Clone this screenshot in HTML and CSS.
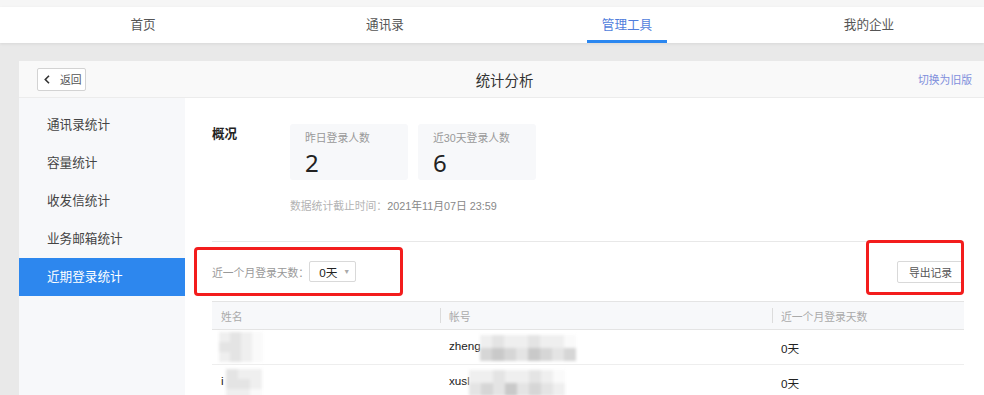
FILE: index.html
```html
<!DOCTYPE html>
<html lang="zh-CN">
<head>
    <meta charset="UTF-8">
    <title>统计分析</title>
    <link rel="stylesheet" href="styles.css">
</head>
<body>
	<div class="top-strip"></div>
	<nav class="top-nav">
		<a class="nav-item"><span>首页</span></a>
		<a class="nav-item"><span>通讯录</span></a>
		<a class="nav-item active"><span>管理工具</span></a>
		<a class="nav-item"><span>我的企业</span></a>
	</nav>

	<div class="panel">
		<div class="panel-header">
			<div class="header-left">
				<button class="back-btn">
					<svg width="6" height="9" viewBox="0 0 6 9"><path d="M5 0.8 L1.3 4.5 L5 8.2" fill="none" stroke="#333" stroke-width="1.6"/></svg>
					<span>返回</span>
				</button>
			</div>
			<div class="panel-title">统计分析</div>
			<div class="header-right"><a class="old-version">切换为旧版</a></div>
		</div>

		<div class="panel-body">
			<ul class="side-menu">
				<li>通讯录统计</li>
				<li>容量统计</li>
				<li>收发信统计</li>
				<li>业务邮箱统计</li>
				<li class="active">近期登录统计</li>
			</ul>

			<div class="content">
				<div class="overview">
					<div class="overview-label">概况</div>
					<div class="overview-main">
						<div class="cards">
							<div class="card">
								<div class="card-label">昨日登录人数</div>
								<div class="card-num">2</div>
							</div>
							<div class="card">
								<div class="card-label">近30天登录人数</div>
								<div class="card-num">6</div>
							</div>
						</div>
						<div class="stat-time">数据统计截止时间：<span>2021年11月07日 23:59</span></div>
					</div>
				</div>

				<div class="filter-bar">
					<div class="filter">
						<span class="filter-label">近一个月登录天数：</span>
						<div class="select"><span>0天</span><span class="arrow">▼</span></div>
					</div>
					<button class="export-btn">导出记录</button>
				</div>

				<table class="login-table">
					<colgroup>
						<col class="col-name">
						<col class="col-account">
						<col class="col-days">
					</colgroup>
					<thead>
						<tr><th>姓名</th><th>帐号</th><th>近一个月登录天数</th></tr>
					</thead>
					<tbody>
						<tr>
							<td><span class="mosaic m-name"><i class="c1"></i><i class="c2"></i><i class="c1"></i><i class="c0"></i><i class="c2"></i><i class="c2"></i><i class="c1"></i><i class="c0"></i><i class="c1"></i><i class="c2"></i><i class="c1"></i><i class="c0"></i></span></td>
							<td>zheng<span class="mosaic m-acc"><i class="c1"></i><i class="c2"></i><i class="c1"></i><i class="c1"></i><i class="c2"></i><i class="c1"></i><i class="c1"></i><i class="c0"></i><i class="c3"></i><i class="c4"></i><i class="c3"></i><i class="c2"></i><i class="c4"></i><i class="c3"></i><i class="c2"></i><i class="c3"></i></span></td>
							<td>0天</td>
						</tr>
						<tr>
							<td>i<span class="mosaic m-name2"><i class="c2"></i><i class="c1"></i><i class="c1"></i><i class="c2"></i><i class="c2"></i><i class="c1"></i><i class="c1"></i><i class="c1"></i><i class="c0"></i></span></td>
							<td>xusl<span class="mosaic m-acc"><i class="c1"></i><i class="c1"></i><i class="c2"></i><i class="c1"></i><i class="c1"></i><i class="c2"></i><i class="c1"></i><i class="c0"></i><i class="c2"></i><i class="c3"></i><i class="c2"></i><i class="c4"></i><i class="c2"></i><i class="c3"></i><i class="c2"></i><i class="c1"></i></span></td>
							<td>0天</td>
						</tr>
					</tbody>
				</table>
			</div>
		</div>
	</div>

	<div class="mark mark-filter"></div>
	<div class="mark mark-export"></div>
</body>
</html>
```

FILE: styles.css
```css
html, body {
	overflow: hidden;
}

body {
	margin: 0;
	width: 984px;
	height: 395px;
	background: #e9e9e9;
	font-family: "Liberation Sans", "Noto Sans CJK SC", sans-serif;
	color: #333;
	position: relative;
}

.top-strip {
	height: 7px;
	background: #f6f6f6;
}

.top-nav {
	display: flex;
	height: 36px;
	padding-left: 22px;
	background: #fff;
	box-shadow: 0 1px 3px rgba(0, 0, 0, 0.08);
}

.nav-item {
	width: 242px;
	flex: none;
	text-align: center;
	font-size: 12.6px;
	color: #555;
}

.nav-item span {
	display: inline-block;
	height: 36px;
	line-height: 36px;
	padding: 0 15px;
}

.nav-item.active span {
	color: #4f7ddc;
	box-shadow: inset 0 -3px 0 #2b87f0;
}

.panel {
	width: 972px;
	margin: 18px 0 0 19px;
}

.panel-header {
	display: grid;
	grid-template-columns: 1fr auto 1fr;
	align-items: center;
	height: 36px;
	padding: 0 19px 0 18px;
	background: #f9f9f9;
	border-bottom: 1px solid #ececec;
}

.back-btn {
	display: flex;
	align-items: center;
	gap: 10px;
	width: 49px;
	height: 23px;
	padding: 0 0 0 6px;
	border: 1px solid #d3d3d3;
	border-radius: 2px;
	background: #fff;
	font-family: inherit;
	font-size: 10.8px;
	color: #555;
}

.panel-title {
	font-size: 14.4px;
	color: #333;
}

.header-right {
	text-align: right;
}

.old-version {
	font-size: 10.8px;
	color: #7f8fdc;
}

.panel-body {
	display: flex;
	min-height: 320px;
}

.side-menu {
	width: 166px;
	flex: none;
	margin: 0;
	padding: 8px 0 0;
	list-style: none;
	background: #f7f8fa;
}

.side-menu li {
	height: 38px;
	line-height: 38px;
	padding-left: 28px;
	font-size: 12.6px;
	color: #444;
}

.side-menu li.active {
	background: #2d87ee;
	color: #fff;
}

.content {
	flex: 1;
	padding: 26px 27px 0;
	background: #fff;
}

.overview {
	display: flex;
}

.overview-label {
	width: 78px;
	flex: none;
	line-height: 18px;
	font-size: 12.6px;
	font-weight: bold;
	color: #222;
	font-family: "Noto Sans CJK SC", serif;
}

.cards {
	display: flex;
	gap: 10px;
}

.card {
	width: 118px;
	height: 56px;
	box-sizing: border-box;
	padding: 7px 15px 0;
	background: #f7f8fa;
	border-radius: 3px;
}

.card-label {
	font-size: 10.8px;
	line-height: 14px;
	color: #999;
}

.card-num {
	margin-top: 4px;
	font-family: "Noto Sans", sans-serif;
	font-size: 24px;
	line-height: 28px;
	color: #222;
}

.stat-time {
	margin-top: 19px;
	font-size: 10.8px;
	line-height: 14px;
	color: #b3b3b3;
}

.stat-time span {
	color: #888;
}

.filter-bar {
	display: flex;
	align-items: center;
	justify-content: space-between;
	height: 59px;
	margin-top: 28px;
	border-top: 1px solid #e8e8e8;
}

.filter {
	display: flex;
	align-items: center;
	gap: 0;
}

.filter-label {
	font-size: 10.8px;
	color: #999;
}

.select {
	display: flex;
	align-items: center;
	justify-content: space-between;
	width: 47px;
	height: 21px;
	box-sizing: border-box;
	padding: 0 5px 0 9px;
	border: 1px solid #d9d9d9;
	border-radius: 2px;
	font-size: 11.7px;
	color: #222;
}

.select .arrow {
	font-size: 7px;
	color: #aaa;
}

.export-btn {
	width: 67px;
	height: 22px;
	border: 1px solid #d9d9d9;
	border-radius: 2px;
	background: #fff;
	font-family: inherit;
	font-size: 10.8px;
	color: #555;
}

.login-table {
	width: 100%;
	table-layout: fixed;
	border-collapse: collapse;
}

.col-name { width: 228px; }
.col-account { width: 332px; }
.col-days { width: 192px; }

.login-table thead tr {
	height: 28px;
	background: #f7f8fa;
	border-top: 1px solid #e4e4e4;
	border-bottom: 1px solid #e4e4e4;
}

.login-table th {
	padding: 0 9px;
	text-align: left;
	font-weight: normal;
	font-size: 10.8px;
	color: #aaa;
}

.login-table th + th {
	background: linear-gradient(#dcdcdc, #dcdcdc) left center / 1px 15px no-repeat;
}

.login-table tbody tr {
	height: 35px;
	border-bottom: 1px solid #eee;
}

.login-table td {
	padding: 0 9px;
	font-size: 11.7px;
	color: #222;
	white-space: nowrap;
	overflow: visible;
}

.mosaic {
	display: inline-grid;
	vertical-align: middle;
	filter: blur(1.6px);
}

.mosaic i {
	display: block;
}

.m-name {
	grid-template-columns: repeat(4, 11px);
	grid-auto-rows: 10px;
	margin-left: -2px;
}

.m-name2 {
	grid-template-columns: repeat(3, 12px);
	grid-auto-rows: 10px;
	margin: 4px 0 0 2px;
}

.m-acc {
	grid-template-columns: repeat(8, 12px);
	grid-auto-rows: 13px;
	margin: 2px 0 0 -1px;
}

.c0 { background: #fafafa; }
.c1 { background: #efefef; }
.c2 { background: #e4e4e4; }
.c3 { background: #d6d6d6; }
.c4 { background: #c9c9c9; }

.mark {
	position: absolute;
	border: 3px solid #f31d1d;
	border-radius: 4px;
	box-sizing: border-box;
}

.mark-filter {
	left: 194px;
	top: 247px;
	width: 209px;
	height: 49px;
}

.mark-export {
	left: 866px;
	top: 240px;
	width: 98px;
	height: 55px;
}
```
